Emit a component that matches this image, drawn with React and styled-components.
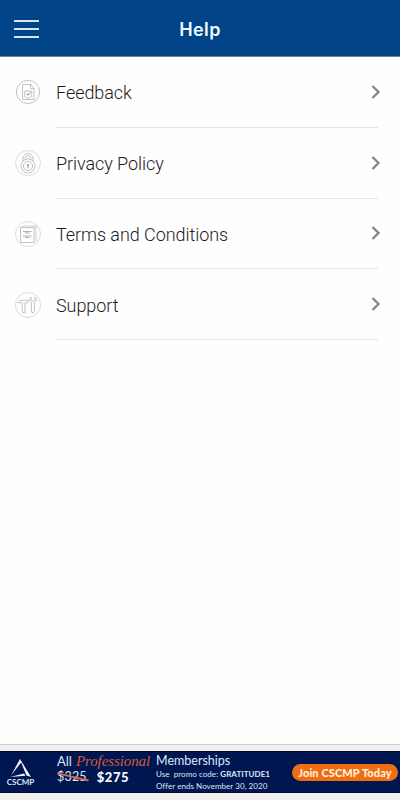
import React from 'react';
import styled, { createGlobalStyle } from 'styled-components';

const GlobalStyle = createGlobalStyle`
  body {
    margin: 0;
    background-color: #fefefe;
  }
`;

const Screen = styled.div`
  display: flex;
  flex-direction: column;
  height: 800px;
  overflow: hidden;
  background-color: #fefefe;
  font-family: Roboto, sans-serif;
`;

const Header = styled.header`
  display: grid;
  grid-template-columns: 60px 1fr 60px;
  align-items: center;
  height: 56px;
  background-color: #004386;
  border-bottom: 1px solid #6c8299;
`;

const MenuButton = styled.button`
  display: flex;
  flex-direction: column;
  gap: 6px;
  margin: 2px 0 0 14px;
  padding: 0;
  width: 25px;
  border: none;
  background: none;
  cursor: pointer;
`;

const MenuBar = styled.span`
  height: 2px;
  background-color: #d3e6f3;
`;

const Title = styled.h1`
  margin: 3px 0 0;
  color: #f2f8ff;
  font-family: Inter, sans-serif;
  font-size: 18px;
  font-weight: 600;
  letter-spacing: 0.4px;
  line-height: 24px;
  text-align: center;
`;

const Menu = styled.main`
  flex: 1;
  padding: 0 22px 0 15px;
`;

const Row = styled.div`
  display: flex;
  align-items: center;
  height: 70.8px;
  cursor: pointer;
`;

const IconSlot = styled.div`
  width: 41px;
  height: 26px;
`;

const RowBody = styled.div`
  flex: 1;
  display: flex;
  align-items: center;
  justify-content: space-between;
  box-sizing: border-box;
  height: 100%;
  border-bottom: 1px solid #e6e6e6;
`;

const Label = styled.span`
  padding-top: 3px;
  color: #1c1c1c;
  font-size: 18px;
  font-weight: 360;
  letter-spacing: -0.06px;
  line-height: 24px;
`;

const Chevron = styled.svg`
  width: 10px;
  height: 16px;
  margin-right: -3px;
`;

const Footer = styled.footer`
  padding: 6px 0 7px;
  border-top: 1px solid #d0cfcf;
  background-color: #f1efee;
`;

const Banner = styled.div`
  display: flex;
  align-items: center;
  box-sizing: border-box;
  height: 42px;
  background-color: #001650;
  color: #dce6f4;
  border-top: 1px solid #00092c;
  border-bottom: 1px solid #00092c;
  font-family: Lato, sans-serif;
  white-space: nowrap;
`;

const Brand = styled.div`
  display: flex;
  flex-direction: column;
  align-items: center;
  width: 41px;
`;

const BrandName = styled.span`
  margin-top: -2px;
  font-size: 8px;
  font-weight: 700;
  line-height: 8px;
  letter-spacing: 0.05px;
`;

const Offer = styled.div`
  width: 99px;
  margin-left: 16px;
  padding-bottom: 7px;
`;

const OfferLine = styled.div`
  display: flex;
  align-items: center;
  gap: ${props => props.$gap};
  height: ${props => props.$height};
  font-size: 13px;
  line-height: 16px;
`;

const Script = styled.em`
  color: #d4583a;
  font-family: "Z003", "URW Chancery L", "Liberation Serif", serif;
  font-size: 15px;
  letter-spacing: -0.1px;
`;

const OldPrice = styled.span`
  position: relative;
  font-size: 12.5px;
  letter-spacing: 0.2px;

  &::after {
    content: '';
    position: absolute;
    left: 0;
    top: 7px;
    width: 32px;
    height: 1.5px;
    background-color: #cf6847;
    transform: rotate(13deg);
  }
`;

const NewPrice = styled.strong`
  color: #f4f8ff;
  font-size: 13px;
  font-weight: 900;
  letter-spacing: 0.5px;
`;

const Details = styled.div`
  width: 136px;
  padding-top: 1px;
`;

const DetailTitle = styled.div`
  font-size: 12.5px;
  line-height: 14px;
`;

const DetailText = styled.div`
  font-size: 8px;
  line-height: ${props => props.$line};
  letter-spacing: 0.05px;
  white-space: pre;
`;

const JoinButton = styled.button`
  width: 106px;
  height: 17px;
  margin: 1px 0 0;
  padding: 0;
  border: none;
  border-radius: 9px;
  background-color: #f06d13;
  color: #fff1dc;
  font-family: Lato, sans-serif;
  font-size: 11px;
  font-weight: 900;
  line-height: 16px;
  letter-spacing: 0.1px;
  cursor: pointer;
`;

const CircleIcon = ({ children, stroke = '#d2d2d2', r = 12.5 }) => (
  <svg width="26" height="26" viewBox="0 0 26 26" fill="none" stroke="#b5b5b5" strokeWidth="0.8">
    <circle cx="13" cy="13" r={r} stroke={stroke} />
    {children}
  </svg>
);

const FeedbackIcon = () => (
  <CircleIcon stroke="#b2b2b2" r={11.6}>
    <path d="M7.5 5.5h8l3.5 4V20.5H7.5zM15.5 5.5v4H19" />
    <path d="M9.7 12h7v5.500l-3.500 2-3.500-2z" />
    <path d="M11.700 15l1.100 1.100 2.400-2.600" stroke="#777" strokeWidth="1" />
  </CircleIcon>
);

const PrivacyIcon = () => (
  <CircleIcon>
    <circle cx="13" cy="16" r="7" />
    <circle cx="13" cy="16" r="4.600" />
    <path d="M8 10.800V8.500a5 5 0 0 1 10 0v2.300M10 9.500V8.500a3 3 0 0 1 6 0v1" />
    <path d="M13 15.500v3" stroke="#888" />
    <circle cx="13" cy="15" r="0.900" fill="#888" stroke="none" />
  </CircleIcon>
);

const TermsIcon = () => (
  <CircleIcon>
    <path d="M5.500 6.500H19V21.500H5.500z" />
    <path d="M5.500 6.500L8 5h13v14.500l-2 2M19 6.500L21 5" stroke="#c6c6c6" />
    <path d="M8 10.500h8.500M10 12h4.500M8 15h8.500M10 16.500h4.500" stroke="#9a9a9a" />
  </CircleIcon>
);

const SupportIcon = () => (
  <CircleIcon>
    <path d="M3 10.700c1-2 2.200-2.400 4-2.400h6v2.400H10v10H7.200v-10H3z" />
    <path d="M16 5.200c-1.900 1.500-1.700 4.300.5 5.500v8.600a1.500 1.500 0 0 0 3 0v-8.600c2.200-1.200 2.400-4 .5-5.500v3l-2 1.300-2-1.300z" />
  </CircleIcon>
);

const BrandMark = () => (
  <svg width="24" height="22" viewBox="0 0 24 22" fill="#f0f5ff">
    <path d="M11 1L2 17.500 12.500 4z" />
    <path d="M11 1L22 19l-4.500-1.500L12.500 5.500z" />
    <path d="M1 19l14-3.500 1.500 2.300z" />
  </svg>
);

const items = [
  { label: 'Feedback', Icon: FeedbackIcon },
  { label: 'Privacy Policy', Icon: PrivacyIcon },
  { label: 'Terms and Conditions', Icon: TermsIcon },
  { label: 'Support', Icon: SupportIcon },
];

const App = () => {
  return (
    <Screen>
      <GlobalStyle />
      <Header>
        <MenuButton aria-label="Menu">
          <MenuBar />
          <MenuBar />
          <MenuBar />
        </MenuButton>
        <Title>Help</Title>
      </Header>
      <Menu>
        {items.map(({ label, Icon }) => (
          <Row key={label}>
            <IconSlot>
              <Icon />
            </IconSlot>
            <RowBody>
              <Label>{label}</Label>
              <Chevron viewBox="0 0 10 16" fill="none" stroke="#858585" strokeWidth="2.300">
                <path d="M1.500 2l6 6-6 6" />
              </Chevron>
            </RowBody>
          </Row>
        ))}
      </Menu>
      <Footer>
        <Banner>
          <Brand>
            <BrandMark />
            <BrandName>CSCMP</BrandName>
          </Brand>
          <Offer>
            <OfferLine $gap="4px" $height="17px">
              <span>All</span>
              <Script>Professional</Script>
            </OfferLine>
            <OfferLine $gap="10px" $height="16px">
              <OldPrice>$325</OldPrice>
              <NewPrice>$275</NewPrice>
            </OfferLine>
          </Offer>
          <Details>
            <DetailTitle>Memberships</DetailTitle>
            <DetailText $line="13px">
              {'Use  promo code: '}
              <strong>GRATITUDE1</strong>
            </DetailText>
            <DetailText $line="11px">Offer ends November 30, 2020</DetailText>
          </Details>
          <JoinButton>Join CSCMP Today</JoinButton>
        </Banner>
      </Footer>
    </Screen>
  );
};

export default App;
